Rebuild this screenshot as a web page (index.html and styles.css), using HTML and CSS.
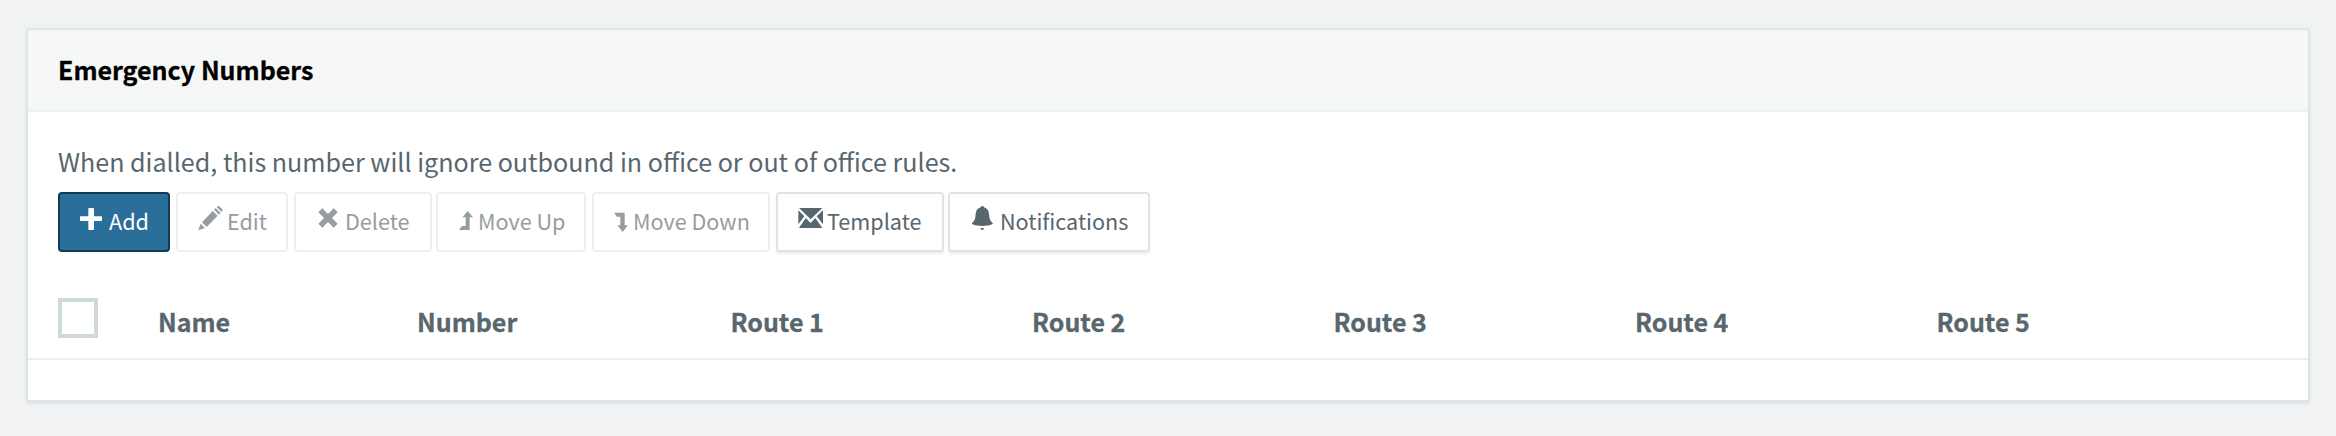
FILE: index.html
```
<!DOCTYPE html>
<html lang="en">
<head>
<meta charset="utf-8">
<title>Emergency Numbers</title>
<link rel="stylesheet" href="styles.css">
</head>
<body>
<section class="panel">
  <header class="panel-header"><h2 class="panel-title">Emergency Numbers</h2></header>
  <div class="panel-body">
    <p class="description">When dialled, this number will ignore outbound in office or out of office rules.</p>
    <div class="toolbar">
      <button class="btn btn-primary btn-add"><svg class="icon" width="22" height="28" viewBox="120 72 66 84"><path d="M147 84h13q2 0 2 2v23h22q2 0 2 2v10q0 2-2 2h-22v25q0 2-2 2h-13q-2 0-2-2v-25h-23q-2 0-2-2v-10q0-2 2-2h23v-23q0-2 2-2z"/></svg><span>Add</span></button>
      <button class="btn btn-edit" disabled><svg class="icon" width="25" height="28" viewBox="473 72 75 84"><path d="M474 151l7-20 13 13zM485 127l32-34 15 14-33 34zM521 89l5-5 15 15-5 5zM529 81l3-2q2-2 5 0l9 9q2 3 0 5l-2 3z"/></svg><span>Edit</span></button>
      <button class="btn btn-delete" disabled><svg class="icon" width="20" height="28" viewBox="835 72 60 84"><path d="M848 85l17 17 17-17 12 12-17 17 17 17-12 12-17-17-17 17-12-12 17-17-17-17z"/></svg><span>Delete</span></button>
      <button class="btn btn-up" disabled><svg class="icon" width="14" height="28" viewBox="87 72 42 84"><path d="M113 93l16 19h-10v38H87l9-12h11v-26H97z"/></svg><span>Move Up</span></button>
      <button class="btn btn-down" disabled><svg class="icon" width="14" height="28" viewBox="552 72 42 84"><path d="M552 98h32v38h10l-16 20-16-20h9v-26h-10z"/></svg><span>Move Down</span></button>
      <button class="btn btn-template"><svg class="icon" width="25" height="28" viewBox="114 72 75 84"><path d="M117 84h70l-35 34zM115 91l18 18-18 24zM189 91v42l-19-24zM137 114l15 15 14-15 21 30h-70z"/></svg><span>Template</span></button>
      <button class="btn btn-bell"><svg class="icon" width="21" height="28" viewBox="637 72 63 84"><path d="M663 82q0-4 5-4t5 4q14 4 15 20 1 20 9 25 5 4 0 6-10 5-29 5t-29-5q-4-2 0-6 8-5 9-25 1-16 15-20zM662 144h11q-1 6-5 6t-6-6z"/></svg><span>Notifications</span></button>
    </div>
  </div>
  <div class="table-head">
    <div class="check-cell"><span class="checkbox"></span></div>
    <div>Name</div><div>Number</div><div>Route 1</div><div>Route 2</div><div>Route 3</div><div>Route 4</div><div>Route 5</div>
  </div>
</section>
</body>
</html>
```
FILE: styles.css
```
* { box-sizing: border-box; }
body {
  margin: 0;
  padding: 28px 26px;
  background: #f0f2f4;
  color: #58666e;
  font-family: "Noto Sans CJK SC", "Noto Sans", sans-serif;
}
.panel {
  height: 374px;
  border: 2px solid #dee5e7;
  border-radius: 4px;
  background: #fff;
  box-shadow: 0 2px 3px rgba(0, 0, 0, .08);
}
.panel-header {
  height: 82px;
  padding: 19px 30px 0;
  border-bottom: 2px solid #edf1f2;
  background: #f6f8f8;
}
.panel-title {
  margin: 0;
  font-size: 25px;
  line-height: 40px;
  font-weight: 700;
  -webkit-text-stroke: .3px;
  color: #000;
}
.panel-body { height: 178px; padding: 29px 30px 0; }
.description {
  margin: 0;
  height: 51px;
  font-size: 25.08px;
  line-height: 40px;
  white-space: nowrap;
}
.toolbar { display: flex; }
.btn {
  display: flex;
  align-items: flex-start;
  height: 60px;
  margin: 0 6px 0 0;
  padding: 10px 0 0 20px;
  border: 2px solid #dee5e7;
  border-radius: 4px;
  background: #fff;
  box-shadow: 0 2px 2px rgba(90, 90, 90, .1);
  color: #58666e;
  font: 21.6px/34px "Noto Sans CJK SC", "Noto Sans", sans-serif;
  white-space: nowrap;
}
.btn:disabled { border-color: #eaefef; color: #969da1; box-shadow: none; }
.btn-primary { border-color: #163a52; background: #2a6f9a; color: #fff; box-shadow: none; }
.icon { flex: none; fill: currentColor; }
.btn-add { width: 112px; }
.btn-edit { width: 112px; }
.btn-delete { width: 138px; margin-right: 4px; padding-left: 22px; }
.btn-up { width: 150px; padding-left: 21px; }
.btn-down { width: 178px; }
.btn-template { width: 168px; margin-right: 4px; }
.btn-bell { width: 202px; padding-left: 22px; }
.btn span { margin-left: 4px; }
.btn-add span { margin-left: 7px; }
.btn-delete span { margin-left: 7px; }
.btn-up span, .btn-down span { margin-left: 5px; }
.btn-bell span { margin-left: 7px; }
.table-head {
  display: grid;
  grid-template-columns: 100px 259px 313.5px 301.5px 301.5px 301.5px 301.5px 1fr;
  height: 70px;
  padding: 8px 0 0 30px;
  border-bottom: 2px solid #eaefef;
  font-size: 25px;
  line-height: 46px;
  font-weight: 700;
  -webkit-text-stroke: .3px;
}
.checkbox { display: block; width: 40px; height: 40px; border: 4px solid #cfdadd; }
```
